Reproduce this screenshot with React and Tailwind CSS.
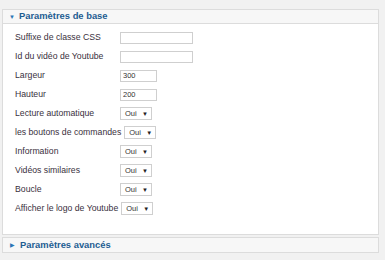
const rows = [
  { label: 'Suffixe de classe CSS', type: 'text', w: 'w-[73px]' },
  { label: 'Id du vidéo de Youtube', type: 'text', w: 'w-[73px]' },
  { label: 'Largeur', type: 'text', w: 'w-[37px]', value: '300' },
  { label: 'Hauteur', type: 'text', w: 'w-[37px]', value: '200' },
  { label: 'Lecture automatique', type: 'select' },
  { label: 'les boutons de commandes', type: 'select' },
  { label: 'Information', type: 'select' },
  { label: 'Vidéos similaires', type: 'select' },
  { label: 'Boucle', type: 'select' },
  { label: 'Afficher le logo de Youtube', type: 'select' },
]

function FakeSelect() {
  return (
    <div className="flex items-center justify-between w-[32px] h-[13px] border border-[#cfcfcf] bg-white pl-[4px] pr-[3px]">
      <span className="text-[7.5px] leading-none text-[#333]">Oui</span>
      <span className="text-[6px] leading-none text-[#222]">▼</span>
    </div>
  )
}

function Row({ label, type, w, value }) {
  return (
    <div className="flex items-center h-[19px]">
      <span className="min-w-[102px] mr-[3px] whitespace-nowrap text-[8.7px] text-[#3a3140]">{label}</span>
      {type === 'select' ? (
        <FakeSelect />
      ) : (
        <div className={`${w} h-[12px] border border-[#cfcfcf] bg-white flex items-center pl-[2px]`}>
          <span className="text-[7.5px] leading-none text-[#333]">{value}</span>
        </div>
      )}
    </div>
  )
}

export default function App() {
  return (
    <div
      className="h-[260px] bg-[#f1f1f1] pt-[9px] pl-[2px] pr-[6px]"
      style={{ fontFamily: '"Liberation Sans", Arial, sans-serif' }}
    >
      {/* Paramètres de base */}
      <div className="border border-[#dcdcdc] bg-white">
        <div className="flex items-center h-[14px] bg-[#f7f7f7] border-b border-[#dcdcdc] pl-[6px]">
          <span className="text-[6px] leading-none text-[#2a76b5] mr-[4px]">▼</span>
          <span className="text-[9.4px] font-bold text-[#1d5d92]">Paramètres de base</span>
        </div>
        <div className="pl-[12px] pt-[4px] pb-[16px]">
          {rows.map((r) => (
            <Row key={r.label} {...r} />
          ))}
        </div>
      </div>

      {/* Paramètres avancés */}
      <div className="mt-[2px] border border-[#dcdcdc] bg-[#f7f7f7] h-[16px] flex items-center pl-[7px]">
        <span className="text-[6px] leading-none text-[#2a76b5] mr-[5px]">▶</span>
        <span className="text-[9.4px] font-bold text-[#1d5d92]">Paramètres avancés</span>
      </div>
    </div>
  )
}
